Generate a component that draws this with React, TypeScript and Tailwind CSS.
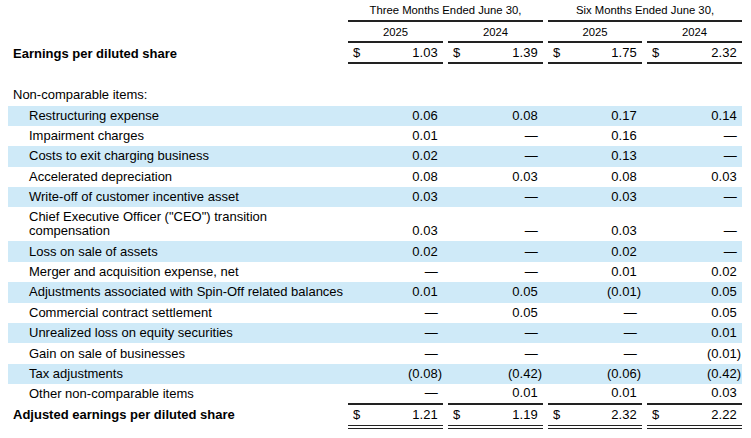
import React from 'react';

type Item = {
    label: string;
    label2?: string;
    values: string[];
};

// Non-comparable items, in the order they appear in the reconciliation
const items: Item[] = [
    { label: 'Restructuring expense', values: ['0.06', '0.08', '0.17', '0.14'] },
    { label: 'Impairment charges', values: ['0.01', '—', '0.16', '—'] },
    { label: 'Costs to exit charging business', values: ['0.02', '—', '0.13', '—'] },
    { label: 'Accelerated depreciation', values: ['0.08', '0.03', '0.08', '0.03'] },
    { label: 'Write-off of customer incentive asset', values: ['0.03', '—', '0.03', '—'] },
    { label: 'Chief Executive Officer ("CEO") transition', label2: 'compensation', values: ['0.03', '—', '0.03', '—'] },
    { label: 'Loss on sale of assets', values: ['0.02', '—', '0.02', '—'] },
    { label: 'Merger and acquisition expense, net', values: ['—', '—', '0.01', '0.02'] },
    { label: 'Adjustments associated with Spin-Off related balances', values: ['0.01', '0.05', '(0.01)', '0.05'] },
    { label: 'Commercial contract settlement', values: ['—', '0.05', '—', '0.05'] },
    { label: 'Unrealized loss on equity securities', values: ['—', '—', '—', '0.01'] },
    { label: 'Gain on sale of businesses', values: ['—', '—', '—', '(0.01)'] },
    { label: 'Tax adjustments', values: ['(0.08)', '(0.42)', '(0.06)', '(0.42)'] },
    { label: 'Other non-comparable items', values: ['—', '0.01', '0.01', '0.03'] },
];

const eps = ['1.03', '1.39', '1.75', '2.32'];
const adjustedEps = ['1.21', '1.19', '2.32', '2.22'];

const gridCols = 'grid grid-cols-[335px_95px_95px_94px_95px] gap-x-[5px]';

// Keeps the closing paren hanging so plain numbers line up with negatives
const Amount: React.FC<{ value: string; dollar?: boolean; className?: string }> = ({ value, dollar, className }) => {
    const neg = value.endsWith(')');
    const text = neg ? value.slice(0, -1) : value;
    return (
        <div className={`flex justify-between pl-[5px] pr-[1px] ${className ?? 'items-center'}`}>
            <span>{dollar ? '$' : ''}</span>
            <span>
                {text}
                <span className={neg ? '' : 'invisible'}>)</span>
            </span>
        </div>
    );
};

const App: React.FC = () => {
    return (
        <div className="w-[751px] h-[438px] bg-white text-black font-['Liberation_Sans',Arial,sans-serif] text-[13px] leading-[14px] overflow-hidden">
            <div className="ml-[8px] w-[734px]">
                {/* period headers */}
                <div className={`${gridCols} text-[11.3px]`}>
                    <div />
                    <div className="col-span-2 h-[22px] pb-[1px] flex items-center justify-center border-b-2 border-[#222]">Three Months Ended June 30,</div>
                    <div className="col-span-2 h-[22px] pb-[1px] flex items-center justify-center border-b-2 border-[#222]">Six Months Ended June 30,</div>
                </div>
                <div className={`${gridCols} text-[11.3px]`}>
                    <div />
                    {['2025', '2024', '2025', '2024'].map((y, i) => (
                        <div key={i} className="h-[21px] flex items-center justify-center border-b-2 border-[#222]">{y}</div>
                    ))}
                </div>

                {/* reported EPS */}
                <div className={`${gridCols} h-[21px]`}>
                    <div className="flex items-center pl-[5px] font-bold">Earnings per diluted share</div>
                    {eps.map((v, i) => (
                        <Amount key={i} value={v} dollar className="items-center border-b-2 border-[#222]" />
                    ))}
                </div>

                <div className="mt-[21px] h-[20.5px] flex items-center pl-[5px]">Non-comparable items:</div>

                {items.map((item, idx) => {
                    const tall = !!item.label2;
                    const last = idx === items.length - 1;
                    return (
                        <div
                            key={item.label}
                            className={`${gridCols} ${tall ? 'h-[34px]' : 'h-[20.4px]'} ${idx % 2 === 0 ? 'bg-[#cfeaf8]' : ''}`}
                        >
                            <div className="flex flex-col justify-center pl-[21px] whitespace-nowrap">
                                <span>{item.label}</span>
                                {item.label2 && <span>{item.label2}</span>}
                            </div>
                            {item.values.map((v, i) => (
                                <Amount
                                    key={i}
                                    value={v}
                                    className={`${tall ? 'items-end pb-[3px]' : 'items-center'} ${last ? 'border-b-2 border-[#222]' : ''}`}
                                />
                            ))}
                        </div>
                    );
                })}

                {/* adjusted EPS */}
                <div className={`${gridCols} h-[24.5px]`}>
                    <div className="flex items-center pl-[5px] pb-[4px] font-bold whitespace-nowrap">Adjusted earnings per diluted share</div>
                    {adjustedEps.map((v, i) => (
                        <Amount key={i} value={v} dollar className="items-center border-b-4 border-double border-[#222]" />
                    ))}
                </div>
            </div>
        </div>
    );
};

export default App;
